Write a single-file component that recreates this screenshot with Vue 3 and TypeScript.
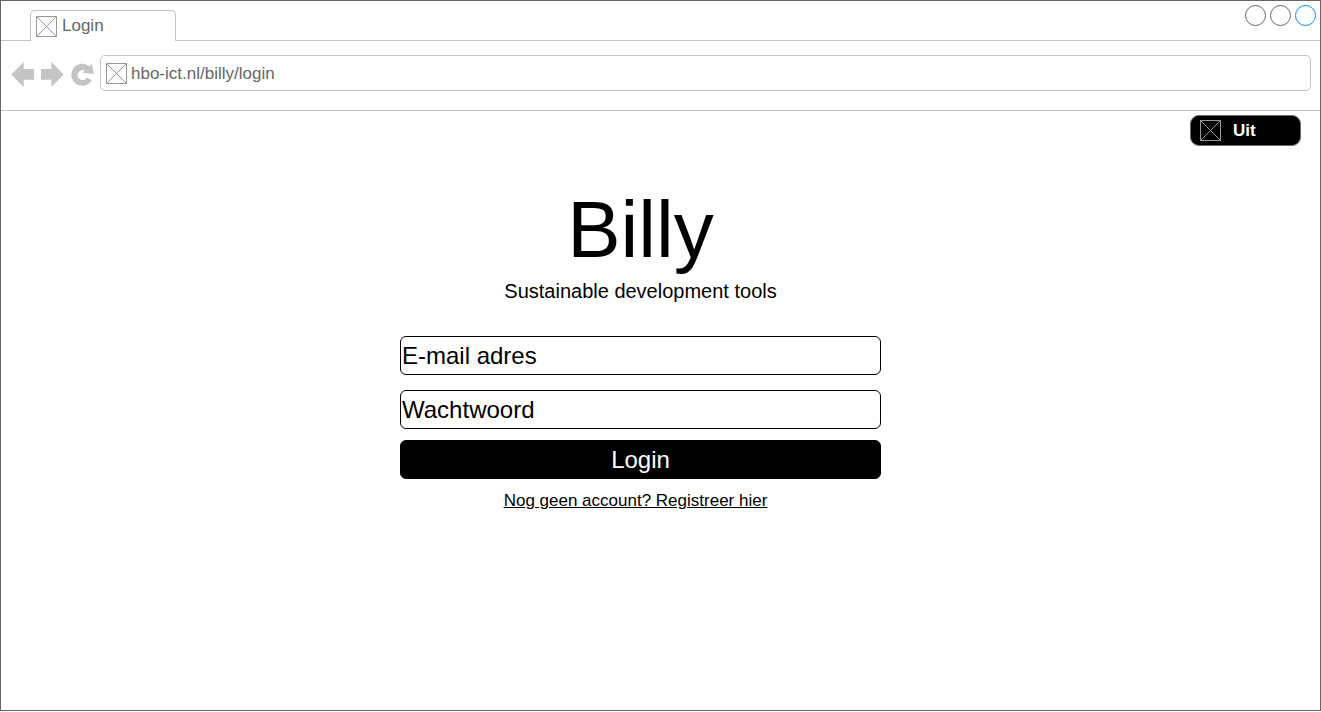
<script setup lang="ts">
import { ref } from 'vue'

const address = ref<string>('hbo-ict.nl/billy/login')
const email = ref<string>('')
const password = ref<string>('')
const windowControls: string[] = ['Minimaliseren', 'Maximaliseren', 'Sluiten']
</script>

<template>
  <div class="window">
    <header class="tab-strip">
      <button class="tab" type="button">
        <svg class="box-icon" viewBox="0 0 21 21" aria-hidden="true">
          <path d="M.5 .5H20.5V20.5H.5ZM.5 .5L20.5 20.5M20.5 .5L.5 20.5" />
        </svg>
        <span>Login</span>
      </button>
      <div class="controls">
        <button
          v-for="(name, index) in windowControls"
          :key="name"
          class="control"
          :class="{ close: index === 2 }"
          type="button"
          :aria-label="name"
        ></button>
      </div>
    </header>

    <nav class="toolbar" aria-label="Navigatie">
      <button class="nav-button" type="button" aria-label="Vorige">
        <svg viewBox="0 0 24 26"><path d="M0.3 12.5L12.7 0V7H23V17.8H12.7V25Z" /></svg>
      </button>
      <button class="nav-button" type="button" aria-label="Volgende">
        <svg viewBox="0 0 24 26"><path d="M22.7 12.5L10.3 0V7H0V17.8H10.3V25Z" /></svg>
      </button>
      <button class="nav-button" type="button" aria-label="Vernieuwen">
        <svg viewBox="0 0 24 26">
          <path d="M18.3 4.2A11 11 0 1 0 20.8 18.3L16 15.5A5 5 0 1 1 14 8.7L11.5 10.8L22.8 12L20.7 1.7Z" />
        </svg>
      </button>
      <div class="address">
        <svg class="box-icon" viewBox="0 0 21 21" aria-hidden="true">
          <path d="M.5 .5H20.5V20.5H.5ZM.5 .5L20.5 20.5M20.5 .5L.5 20.5" />
        </svg>
        <input v-model="address" type="text" aria-label="Adres" />
      </div>
    </nav>

    <div class="page">
      <div class="page-actions">
        <button class="logout" type="button">
          <svg class="box-icon" viewBox="0 0 21 21" aria-hidden="true">
            <path d="M.5 .5H20.5V20.5H.5ZM.5 .5L20.5 20.5M20.5 .5L.5 20.5" />
          </svg>
          <span>Uit</span>
        </button>
      </div>
      <main class="content">
        <h1>Billy</h1>
        <p class="tagline">Sustainable development tools</p>
        <form class="login-form" @submit.prevent>
          <input v-model="email" class="field" type="email" placeholder="E-mail adres" aria-label="E-mail adres" />
          <input v-model="password" class="field" type="password" placeholder="Wachtwoord" aria-label="Wachtwoord" />
          <button class="submit" type="submit">Login</button>
        </form>
        <p class="register"><a href="#">Nog geen account? Registreer hier</a></p>
      </main>
    </div>
  </div>
</template>

<style>
body {
  margin: 0;
  background: #fff;
}
</style>

<style scoped>
.window {
  box-sizing: border-box;
  min-height: calc(100vh - 1px);
  border: 1px solid #666;
  background: #fff;
  color: #000;
  font-family: "Liberation Sans", Arial, sans-serif;
}

button,
input {
  box-sizing: border-box;
  margin: 0;
  padding: 0;
  border: 0;
  background: none;
  color: inherit;
  font: inherit;
}

button {
  cursor: pointer;
}

.box-icon {
  flex: none;
  width: 21px;
  height: 21px;
  fill: none;
  stroke: #999;
}

.tab-strip {
  display: flex;
  justify-content: space-between;
  align-items: flex-end;
  padding: 9px 4px 0 29px;
  border-bottom: 1px solid #c4c4c4;
}

.tab {
  display: flex;
  align-items: center;
  gap: 5px;
  width: 146px;
  height: 31px;
  margin-bottom: -1px;
  padding-left: 5px;
  border: 1px solid #c4c4c4;
  border-bottom: 0;
  border-radius: 5px 5px 0 0;
  background: #fff;
  color: #666;
  font-size: 17px;
  line-height: 20px;
}

.controls {
  display: flex;
  align-self: flex-start;
  gap: 4px;
  margin-top: -5px;
}

.control {
  width: 21px;
  height: 21px;
  border: 1px solid #666;
  border-radius: 50%;
}

.control.close {
  border-color: #008cff;
}

.toolbar {
  display: flex;
  align-items: center;
  gap: 6px;
  padding: 14px 9px 19px 10px;
  border-bottom: 1px solid #c4c4c4;
}

.nav-button {
  width: 24px;
  height: 30px;
  padding-top: 4px;
}

.nav-button:nth-of-type(3) {
  margin-right: -1px;
}

.nav-button svg {
  display: block;
  fill: #c4c4c4;
}

.address {
  box-sizing: border-box;
  display: flex;
  flex: 1;
  align-items: center;
  gap: 4px;
  height: 36px;
  padding-left: 5px;
  border: 1px solid #c4c4c4;
  border-radius: 5px;
}

.address input {
  flex: 1;
  min-width: 0;
  padding-top: 2px;
  outline: 0;
  color: #666;
  font-size: 17px;
  line-height: 20px;
}

.page-actions {
  display: flex;
  justify-content: flex-end;
  padding: 4px 19px 0;
}

.logout {
  display: flex;
  align-items: center;
  gap: 12px;
  width: 111px;
  height: 31px;
  padding-left: 9px;
  border: 1px solid #666;
  border-radius: 9px;
  background: #000;
  color: #fff;
  font-size: 17px;
  font-weight: bold;
}

.content {
  padding: 38px 40px 32px 0;
  text-align: center;
}

h1 {
  margin: 0 0 2px;
  font-size: 80px;
  font-weight: normal;
  line-height: 92px;
}

.tagline {
  margin: 0 0 32px;
  font-size: 20px;
  line-height: 26px;
}

.login-form {
  display: flex;
  flex-direction: column;
  width: 100%;
  max-width: 481px;
  margin: 0 auto;
  font-size: 24px;
}

.field,
.submit {
  width: 100%;
  height: 39px;
  border: 1px solid #000;
  border-radius: 6px;
}

.field {
  padding: 0 1px;
}

.field::placeholder {
  color: #000;
  opacity: 1;
}

.field + .field {
  margin-top: 15px;
}

.submit {
  margin-top: 11px;
  background: #000;
  color: #fff;
}

.register {
  margin: 12px 10px 0 0;
  font-size: 17px;
  line-height: 20px;
}

.register a {
  color: inherit;
}
</style>
